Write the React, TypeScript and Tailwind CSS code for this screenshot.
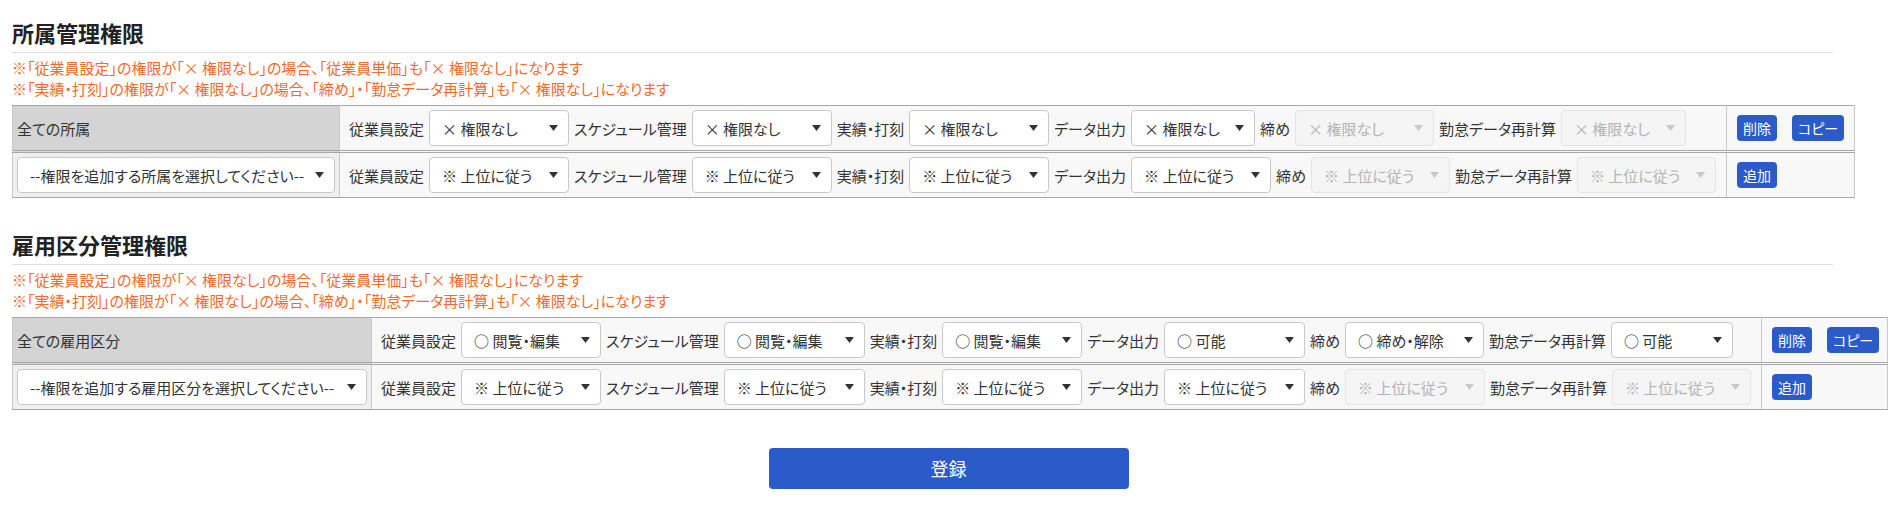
import React from 'react';

/**
 * Permission settings — two tables (所属 / 雇用区分) with per-row selects,
 * plus the register button at the bottom.
 */

interface Field {
  label: string;
  value: string;
  width: number;
  disabled?: boolean;
}

interface PermRow {
  head: 'text' | 'select';
  headText: string;
  headWidth?: number;
  fields: Field[];
  actions: string[];
}

interface Section {
  title: string;
  rows: PermRow[];
}

const LABELS = ['従業員設定', 'スケジュール管理', '実績・打刻', 'データ出力', '締め', '勤怠データ再計算'];

const inherit = (widths: number[]): Field[] =>
  LABELS.map((label, i) => ({ label, value: '※ 上位に従う', width: widths[i], disabled: i >= 4 }));

const NOTES = [
  '※「従業員設定」の権限が「× 権限なし」の場合、「従業員単価」も「× 権限なし」になります',
  '※「実績・打刻」の権限が「× 権限なし」の場合、「締め」・「勤怠データ再計算」も「× 権限なし」になります',
];

const SECTIONS: Section[] = [
  {
    title: '所属管理権限',
    rows: [
      {
        head: 'text',
        headText: '全ての所属',
        fields: [
          { label: LABELS[0], value: '× 権限なし', width: 140 },
          { label: LABELS[1], value: '× 権限なし', width: 140 },
          { label: LABELS[2], value: '× 権限なし', width: 140 },
          { label: LABELS[3], value: '× 権限なし', width: 124 },
          { label: LABELS[4], value: '× 権限なし', width: 139, disabled: true },
          { label: LABELS[5], value: '× 権限なし', width: 125, disabled: true },
        ],
        actions: ['削除', 'コピー'],
      },
      {
        head: 'select',
        headText: '--権限を追加する所属を選択してください--',
        headWidth: 318,
        fields: inherit([140, 140, 140, 140, 139, 139]),
        actions: ['追加'],
      },
    ],
  },
  {
    title: '雇用区分管理権限',
    rows: [
      {
        head: 'text',
        headText: '全ての雇用区分',
        fields: [
          { label: LABELS[0], value: '○ 閲覧・編集', width: 140 },
          { label: LABELS[1], value: '○ 閲覧・編集', width: 141 },
          { label: LABELS[2], value: '○ 閲覧・編集', width: 140 },
          { label: LABELS[3], value: '○ 可能', width: 141 },
          { label: LABELS[4], value: '○ 締め・解除', width: 139 },
          { label: LABELS[5], value: '○ 可能', width: 122 },
        ],
        actions: ['削除', 'コピー'],
      },
      {
        head: 'select',
        headText: '--権限を追加する雇用区分を選択してください--',
        headWidth: 350,
        fields: inherit([140, 141, 140, 141, 140, 139]),
        actions: ['追加'],
      },
    ],
  },
];

function FakeSelect({ value, width, disabled }: { value: string; width: number; disabled?: boolean }) {
  return (
    <div
      className={`flex h-[36px] shrink-0 items-center justify-between rounded-[4px] border pl-[12px] pr-[10px] whitespace-nowrap ${
        disabled ? 'border-[#e4e4e4] bg-[#f5f5f5] text-[#b3b3b3]' : 'border-[#c9c9c9] bg-white text-[#333]'
      }`}
      style={{ width }}
    >
      <span>{value}</span>
      <svg
        width="9"
        height="6"
        viewBox="0 0 9 6"
        className={disabled ? 'text-[#c8c8c8]' : 'text-[#333]'}
        aria-hidden="true"
      >
        <path d="M0 0h9L4.5 6z" fill="currentColor" />
      </svg>
    </div>
  );
}

function PermTable({ rows }: { rows: PermRow[] }) {
  return (
    <table className="mt-[6px] border-collapse">
      <tbody>
        {rows.map((row, ri) => {
          const first = ri === 0;
          // first row closes with a double rule, the last with a plain one
          const rule = first
            ? 'border-t border-b-[3px] border-double border-y-[#a8a8a8] border-x-[#c9c9c9]'
            : 'border-b border-solid border-y-[#a8a8a8] border-x-[#c9c9c9]';
          return (
            <tr key={ri}>
              <td className={`${rule} border-x px-[4px] py-[4px] ${first ? 'bg-[#d4d4d4]' : 'bg-[#efefef]'}`}>
                {row.head === 'text' ? (
                  <span className="text-[#333]">{row.headText}</span>
                ) : (
                  <FakeSelect value={row.headText} width={row.headWidth ?? 318} />
                )}
              </td>
              <td className={`${rule} border-x bg-[#f8f8f8] py-[4px] pl-[9px] pr-[10px]`}>
                <div className="flex items-center gap-[5px] whitespace-nowrap">
                  {row.fields.map((f) => (
                    <React.Fragment key={f.label}>
                      <span className="text-[#333]">{f.label}</span>
                      <FakeSelect value={f.value} width={f.width} disabled={f.disabled} />
                    </React.Fragment>
                  ))}
                </div>
              </td>
              <td className={`${rule} border-x w-[128px] bg-[#f8f8f8] py-[4px] pl-[10px] pr-[8px]`}>
                <div className="flex items-center gap-[15px]">
                  {row.actions.map((a) => (
                    <button
                      key={a}
                      type="button"
                      className="rounded-[4px] bg-[#2a5bc8] px-[6px] text-[14px] leading-[26px] text-white whitespace-nowrap"
                    >
                      {a}
                    </button>
                  ))}
                </div>
              </td>
            </tr>
          );
        })}
      </tbody>
    </table>
  );
}

export default function App() {
  return (
    <div className="min-h-screen bg-white px-[12px] pt-[16px] font-['Noto_Sans_CJK_JP','Noto_Sans',sans-serif] text-[15px] leading-[21px] text-[#333] [font-feature-settings:'palt']">
      {SECTIONS.map((s, i) => (
        <section key={s.title} className={i > 0 ? 'mt-[30px]' : ''}>
          {/* Section heading */}
          <h2 className="mr-[52px] border-b border-[#dddddd] pb-[4px] text-[22px] font-bold leading-[32px] text-[#222]">
            {s.title}
          </h2>
          <div className="mt-[4px] text-[15px] leading-[21px] text-[#f06b2d]">
            {NOTES.map((n) => (
              <div key={n}>{n}</div>
            ))}
          </div>
          <PermTable rows={s.rows} />
        </section>
      ))}

      <div className="mt-[38px] flex justify-center">
        <button
          type="button"
          className="h-[41px] w-[360px] rounded-[4px] bg-[#2a5bc8] text-[18px] text-white"
        >
          登録
        </button>
      </div>
    </div>
  );
}
